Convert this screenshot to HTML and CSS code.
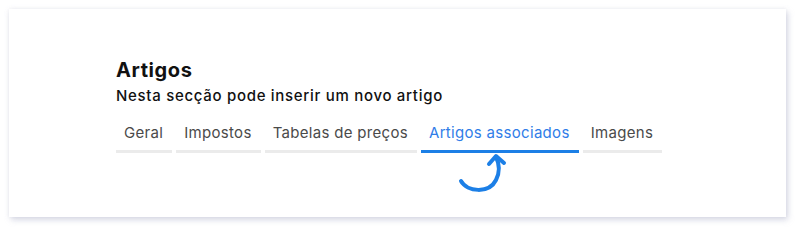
FILE: index.html
```html
<!DOCTYPE html>
<html lang="pt">
<head>
<meta charset="utf-8">
<link rel="stylesheet" href="styles.css">
</head>
<body>
<div class="card">
  <h1 class="title">Artigos</h1>
  <p class="subtitle">Nesta secção pode inserir um novo artigo</p>
  <nav class="tabs">
    <span class="tab">Geral</span>
    <span class="tab">Impostos</span>
    <span class="tab">Tabelas de preços</span>
    <span class="tab active">Artigos associados
      <svg class="arrow" width="60" height="48" viewBox="0 0 60 48">
        <path d="M10 33 C16 44, 38 46, 45 32 C49 24, 49 17, 45 9" fill="none" stroke="#1c7fe6" stroke-width="4" stroke-linecap="round"/>
        <path d="M38 16 L45 8 L53 15" fill="none" stroke="#1c7fe6" stroke-width="4" stroke-linecap="round" stroke-linejoin="round"/>
      </svg>
    </span>
    <span class="tab">Imagens</span>
  </nav>
</div>
</body>
</html>
```
FILE: styles.css
```css
html, body {
  margin: 0;
  padding: 0;
  background: #ffffff;
}
body {
  padding: 9px 14px 15px 9px;
  font-family: "Inter", "Noto Sans", sans-serif;
}
.card {
  width: 777px;
  height: 208px;
  box-sizing: border-box;
  background: #fff;
  box-shadow: 2px 3px 6px rgba(150, 155, 185, 0.35), 0 0 4px rgba(200, 200, 215, 0.3);
  padding: 48px 0 0 107px;
}
.title {
  margin: 0;
  font-size: 20px;
  font-weight: 700;
  color: #111;
  line-height: 26px;
  letter-spacing: 0.6px;
}
.subtitle {
  margin: 3px 0 0;
  font-size: 15px;
  font-weight: 500;
  color: #111;
  line-height: 20px;
  letter-spacing: 0.7px;
}
.tabs {
  display: flex;
  gap: 4px;
  margin-top: 13px;
}
.tab {
  position: relative;
  padding: 4px 9px 7px 8px;
  font-size: 15px;
  color: #4a4a4a;
  border-bottom: 3px solid #ebebeb;
  line-height: 20px;
  letter-spacing: 0.31px;
}
.tab.active {
  color: #2f7de8;
  border-bottom-color: #1c7fe6;
}
.arrow {
  position: absolute;
  left: 30px;
  top: calc(100% - 2px);
}
```
